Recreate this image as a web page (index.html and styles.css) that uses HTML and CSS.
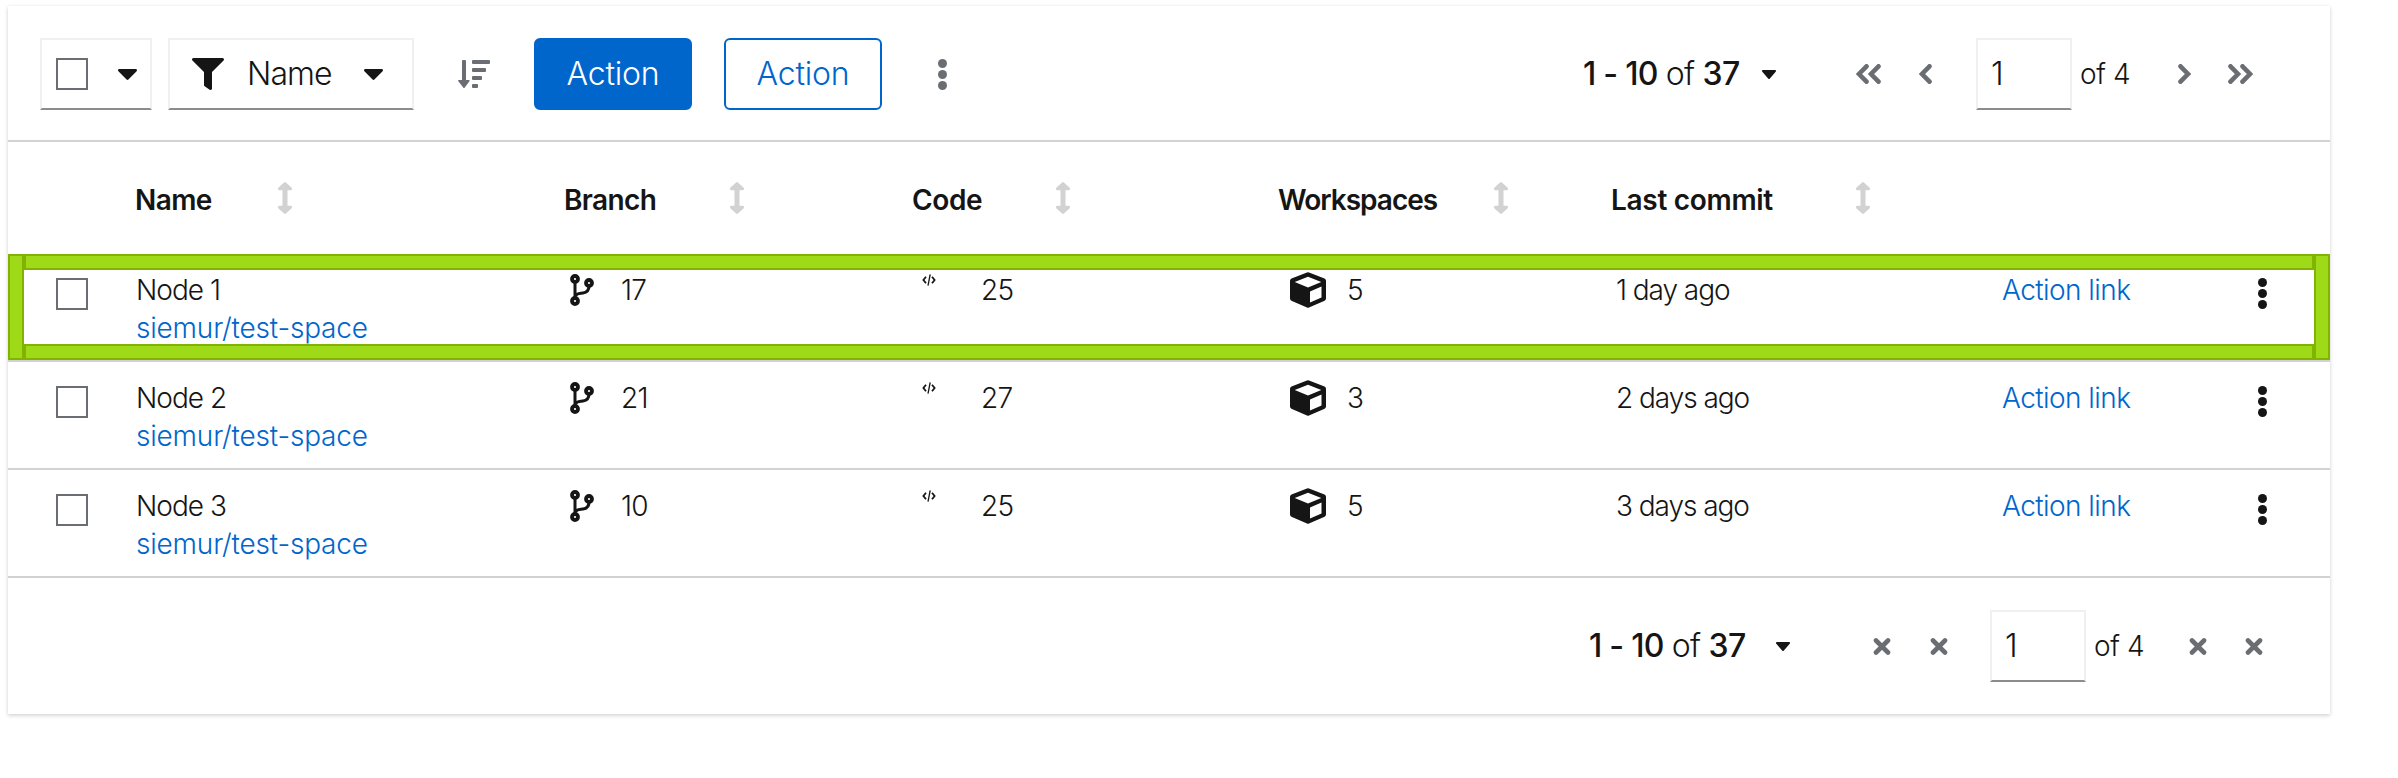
FILE: index.html
```html
<!DOCTYPE html>
<html lang="en">
<head>
<meta charset="utf-8">
<title>Nodes</title>
<link rel="stylesheet" href="styles.css">
</head>
<body>
<svg class="defs" width="0" height="0">
  <symbol id="caret" viewBox="11 191 298 170" preserveAspectRatio="none"><path d="M31.3 192h257.300c17.800 0 26.700 21.500 14.100 34.100L174.100 354.800c-7.800 7.800-20.500 7.800-28.300 0L17.200 226.100C4.600 213.500 13.500 192 31.300 192z"/></symbol>
  <symbol id="filter" viewBox="0 0 512 512"><path d="M487.976 0H24.028C2.710 0-8.047 25.866 7.058 40.971L192 225.941V432c0 7.831 3.821 15.170 10.237 19.662l80 55.980C298.020 518.690 320 507.493 320 487.980V225.941l184.947-184.970C520.021 25.896 509.338 0 487.976 0z"/></symbol>
  <symbol id="sort-down" viewBox="0 0 32 28"><path d="M4 1q0-1 1-1h2q1 0 1 1v19h3q1.300 0 .4 1.200l-4.600 6.200q-.8 1-1.600 0L.3 21.200Q-.5 20 .8 20H4z"/><rect x="14" width="18" height="4" rx="1"/><rect x="14" y="8" width="14" height="4" rx="1"/><rect x="14" y="16" width="10" height="4" rx="1"/><rect x="14" y="24" width="6" height="4" rx="1"/></symbol>
  <symbol id="sort" viewBox="0 0 14 32"><path d="M6.100.4q.9-.8 1.800 0l5.600 5.200q1 1.200.2 2.200-.3.400-1 .4H9.500v15.600h3.200q.7 0 1 .4.800 1-.2 2.200l-5.600 5.200q-.9.800-1.800 0L.5 26.400q-1-1.200-.2-2.200.3-.4 1-.4h3.200V8.200H1.300q-.7 0-1-.4-.8-1 .2-2.200z"/></symbol>
  <symbol id="kebab" viewBox="0 0 9 31"><circle cx="4.500" cy="4.500" r="4.500"/><circle cx="4.500" cy="15.500" r="4.500"/><circle cx="4.500" cy="26.500" r="4.500"/></symbol>
  <symbol id="left" viewBox="0 0 13 20"><path class="chev" d="M10.500 2.300L3 10l7.500 7.700"/></symbol>
  <symbol id="right" viewBox="0 0 13 20"><path class="chev" d="M2.500 2.300L10 10l-7.500 7.700"/></symbol>
  <symbol id="first" viewBox="0 0 25 20"><path class="chev" d="M10.500 2.300L3 10l7.500 7.700M22.500 2.300L15 10l7.500 7.700"/></symbol>
  <symbol id="last" viewBox="0 0 25 20"><path class="chev" d="M2.500 2.300L10 10l-7.500 7.700M14.500 2.300L22 10l-7.500 7.700"/></symbol>
  <symbol id="times" viewBox="0 0 18 17"><path class="cross" d="M3 2.500l12 12M15 2.500l-12 12"/></symbol>
  <symbol id="branch" viewBox="0 0 24 32"><g fill="none" stroke="#151515"><g stroke-width="3.800"><circle cx="5" cy="5" r="3"/><circle cx="5" cy="27" r="3"/><circle cx="19" cy="9" r="3"/></g><path stroke-width="3" d="M5 8v16M5.500 22c1-3 4-2.500 7.500-3 4-.5 6-2.500 6-7"/></g></symbol>
  <symbol id="code" viewBox="0 0 14 12"><path fill="none" stroke="#151515" stroke-width="1.800" d="M4 2.800L1.400 6 4 9.200M10 2.800L12.600 6 10 9.200"/><path fill="none" stroke="#151515" stroke-width="1.300" d="M8.200.3L6 11.700"/></symbol>
  <symbol id="cube" viewBox="0 0 36 36"><path fill-rule="evenodd" d="M17 .5q1-.5 2 0l15.500 6Q36 7.200 36 8.800v17.700q0 1.500-1.400 2.200L19 35.600q-1 .5-2 0L1.400 28.700Q0 28 0 26.500V8.800Q0 7.200 1.500 6.500zM18 4.800L4.700 10 18 15.500 31.300 10zM20 19.500v11L31.500 25.500V14.500z"/></symbol>
</svg>
<main class="card">
  <header class="toolbar">
    <div class="select-all"><span class="check"></span><svg class="caret"><use href="#caret"/></svg></div>
    <div class="filter"><svg class="filter-icon"><use href="#filter"/></svg><span class="filter-label">Name</span><svg class="caret"><use href="#caret"/></svg></div>
    <svg class="sort-down"><use href="#sort-down"/></svg>
    <button class="btn primary">Action</button>
    <button class="btn secondary">Action</button>
    <svg class="kebab muted"><use href="#kebab"/></svg>
    <nav class="pager top">
      <span class="range"><b>1 - 10</b> of <b>37</b></span>
      <svg class="caret-sm"><use href="#caret"/></svg>
      <svg class="double first"><use href="#first"/></svg>
      <svg class="single"><use href="#left"/></svg>
      <span class="page">1</span><span class="total">of 4</span>
      <svg class="single next"><use href="#right"/></svg>
      <svg class="double last"><use href="#last"/></svg>
    </nav>
  </header>
  <div class="row head">
    <span></span>
    <div class="th"><span class="l1">Name</span><svg class="sort"><use href="#sort"/></svg></div>
    <div class="th"><span class="l2">Branch</span><svg class="sort"><use href="#sort"/></svg></div>
    <div class="th"><span class="l3">Code</span><svg class="sort"><use href="#sort"/></svg></div>
    <div class="th"><span class="l4">Workspaces</span><svg class="sort"><use href="#sort"/></svg></div>
    <div class="th"><span class="l5">Last commit</span><svg class="sort"><use href="#sort"/></svg></div>
  </div>
  <div class="row item">
    <span class="check"></span>
    <div class="name"><span class="node">Node 1</span><a class="repo">siemur/test-space</a></div>
    <div class="metric"><svg class="branch"><use href="#branch"/></svg><span>17</span></div>
    <div class="metric"><svg class="code"><use href="#code"/></svg><span>25</span></div>
    <div class="metric"><svg class="cube"><use href="#cube"/></svg><span>5</span></div>
    <span class="date">1 day ago</span>
    <a class="link">Action link</a>
    <svg class="kebab"><use href="#kebab"/></svg>
    <div class="spacing"><i class="side left"></i><i class="bar above"></i><i class="bar below"></i><i class="side right"></i></div>
  </div>
  <div class="row item">
    <span class="check"></span>
    <div class="name"><span class="node">Node 2</span><a class="repo">siemur/test-space</a></div>
    <div class="metric"><svg class="branch"><use href="#branch"/></svg><span>21</span></div>
    <div class="metric"><svg class="code"><use href="#code"/></svg><span>27</span></div>
    <div class="metric"><svg class="cube"><use href="#cube"/></svg><span>3</span></div>
    <span class="date">2 days ago</span>
    <a class="link">Action link</a>
    <svg class="kebab"><use href="#kebab"/></svg>
  </div>
  <div class="row item">
    <span class="check"></span>
    <div class="name"><span class="node">Node 3</span><a class="repo">siemur/test-space</a></div>
    <div class="metric"><svg class="branch"><use href="#branch"/></svg><span>10</span></div>
    <div class="metric"><svg class="code"><use href="#code"/></svg><span>25</span></div>
    <div class="metric"><svg class="cube"><use href="#cube"/></svg><span>5</span></div>
    <span class="date">3 days ago</span>
    <a class="link">Action link</a>
    <svg class="kebab"><use href="#kebab"/></svg>
  </div>
  <footer class="footer">
    <nav class="pager bottom">
      <span class="range"><b>1 - 10</b> of <b>37</b></span>
      <svg class="caret-sm"><use href="#caret"/></svg>
      <svg class="times t1"><use href="#times"/></svg>
      <svg class="times t2"><use href="#times"/></svg>
      <span class="page">1</span><span class="total">of 4</span>
      <svg class="times t3"><use href="#times"/></svg>
      <svg class="times t4"><use href="#times"/></svg>
    </nav>
  </footer>
</main>
</body>
</html>
```
FILE: styles.css
```css
* { box-sizing: border-box; }
body {
  min-height: 778px;
  margin: 0;
  padding: 6px 0 0 8px;
  background: #fff;
  color: #151515;
  font-family: Inter, "Open Sans", sans-serif;
  font-size: 28px;
  font-weight: 300;
  line-height: 38px;
}
svg { display: block; flex: none; fill: #151515; }
.defs { position: absolute; }
.card {
  width: 2322px;
  height: 708px;
  background: #fff;
  box-shadow: 0 2px 4px rgba(3, 3, 3, .14), 0 0 4px rgba(3, 3, 3, .06);
}
.toolbar {
  display: flex;
  align-items: center;
  height: 136px;
  padding: 2px 0 0 32px;
  border-bottom: 2px solid #d2d2d2;
}
.check { width: 32px; height: 32px; border: 2px solid #6a6e73; background: #fff; flex: none; }
.select-all, .filter {
  display: flex;
  align-items: center;
  height: 72px;
  border: 2px solid #f0f0f0;
  border-bottom-color: #8a8d90;
}
.select-all { width: 112px; padding-left: 14px; gap: 30px; }
.filter { width: 246px; margin-left: 16px; padding-left: 22px; }
.caret { width: 19px; height: 11px; }
.filter-icon { width: 32px; height: 32px; }
.filter-label { width: 117px; margin: 0 0 0 23px; font-size: 32px; letter-spacing: -.9px; flex: none; }
.sort-down { width: 32px; height: 28px; margin-left: 44px; fill: #6a6e73; }
.btn {
  width: 158px;
  height: 72px;
  padding: 0;
  border: 2px solid #06c;
  border-radius: 6px;
  font: inherit;
  font-size: 32px;
  letter-spacing: -.2px;
  white-space: nowrap;
}
.primary { margin-left: 44px; background: #06c; color: #fff; }
.secondary { margin-left: 32px; background: #fff; color: #06c; }
.kebab { width: 9px; height: 31px; }
.muted { margin-left: 56px; fill: #6a6e73; }
.pager { display: flex; align-items: center; white-space: nowrap; }
.top { margin-left: 636px; }
.range { width: 179px; font-size: 32px; letter-spacing: -.75px; flex: none; }
.range b { font-weight: 550; }
.caret-sm { width: 14px; height: 9px; }
.double { width: 25px; height: 20px; }
.single { width: 13px; height: 20px; margin-left: 38px; }
.first { margin-left: 80px; }
.next { margin-left: 48px; }
.last { margin-left: 37px; }
.chev { fill: none; stroke: #6a6e73; stroke-width: 4.6; stroke-linecap: round; }
.cross { fill: none; stroke: #6a6e73; stroke-width: 4.6; stroke-linecap: round; }
.page {
  width: 96px;
  height: 72px;
  margin-left: 44px;
  padding-left: 13px;
  border: 2px solid #f0f0f0;
  border-bottom-color: #8a8d90;
  font-size: 32px;
  line-height: 68px;
}
.total { width: 50px; margin-left: 8px; letter-spacing: -.4px; flex: none; }
.row {
  position: relative;
  display: grid;
  grid-template-columns: 80px 429px 348px 366px 333px 390px 256px 9px;
  padding-left: 48px;
  white-space: nowrap;
}
.head { height: 112px; align-items: center; font-weight: 600; }
.th { display: flex; align-items: center; }
.th span { flex: none; padding-top: 3px; text-indent: -1px; }
.l1 { width: 142px; letter-spacing: -.6px; }
.l2 { width: 165px; letter-spacing: -.6px; }
.l3 { width: 143px; letter-spacing: -.4px; }
.l4 { width: 215px; letter-spacing: -1px; }
.l5 { width: 244px; letter-spacing: -.3px; }
.sort { width: 14px; height: 32px; fill: #d2d2d2; }
.item { height: 108px; padding-top: 17px; border-bottom: 2px solid #d2d2d2; align-items: start; }
.item > .check, .item > .kebab { margin-top: 7px; }
.name { display: flex; flex-direction: column; }
.node { letter-spacing: -.95px; }
.repo, .link { color: #06c; }
.repo { letter-spacing: -.2px; }
.link { letter-spacing: -.55px; }
.metric { display: flex; align-items: flex-start; letter-spacing: -.8px; }
.branch { width: 24px; height: 32px; margin: 3px 27px 0 5px; }
.code { width: 14px; height: 12px; margin: 3px 45px 0 9px; }
.cube { width: 36px; height: 36px; margin: 1px 21px 0 11px; }
.date { padding-left: 4px; letter-spacing: -1.05px; }
.spacing { position: absolute; inset: 0; }
.side, .bar { position: absolute; background: #9eda18; border: 2px solid #81b300; }
.side { top: 0; bottom: 0; width: 16px; }
.left { left: 0; }
.right { right: 0; }
.bar { left: 16px; right: 16px; height: 16px; }
.above { top: 0; }
.below { bottom: 0; }
.footer { height: 136px; display: flex; align-items: center; }
.bottom { margin-left: 1581px; }
.bottom .range { width: 187px; }
.times { width: 18px; height: 17px; }
.t1 { margin-left: 83px; }
.t2 { margin-left: 39px; }
.bottom .page { margin-left: 42px; }
.t3 { margin-left: 45px; }
.t4 { margin-left: 38px; }
```
